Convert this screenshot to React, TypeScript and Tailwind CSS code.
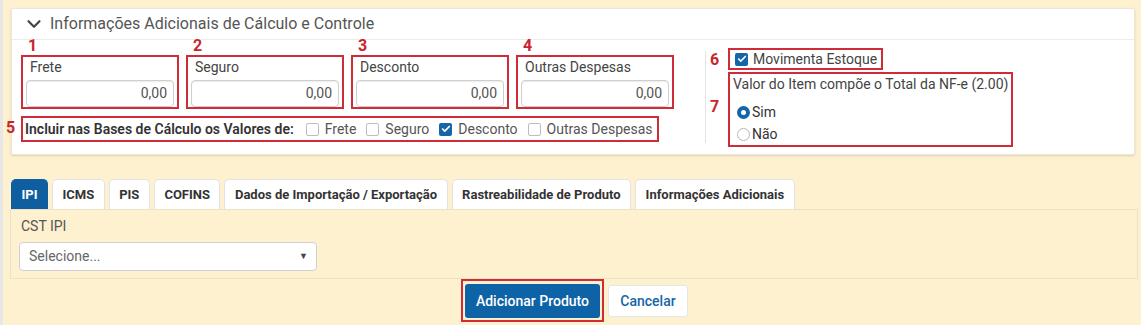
import React from 'react';
import { ChevronDown, Check } from 'lucide-react';

const fields = ['Frete', 'Seguro', 'Desconto', 'Outras Despesas'];

const bases = [
  { label: 'Frete', checked: false },
  { label: 'Seguro', checked: false },
  { label: 'Desconto', checked: true },
  { label: 'Outras Despesas', checked: false },
];

const tabs = [
  'IPI',
  'ICMS',
  'PIS',
  'COFINS',
  'Dados de Importação / Exportação',
  'Rastreabilidade de Produto',
  'Informações Adicionais',
];

function Checkbox({ checked }: { checked: boolean }) {
  if (checked) {
    return (
      <span className="w-[13px] h-[13px] rounded-[2px] bg-[#1565a8] flex items-center justify-center shrink-0">
        <Check size={10} strokeWidth={4} color="#fff" />
      </span>
    );
  }
  return <span className="w-[13px] h-[13px] rounded-[2px] border border-[#bdbdbd] bg-white shrink-0" />;
}

function Radio({ checked }: { checked: boolean }) {
  if (checked) {
    return (
      <span className="w-[13px] h-[13px] rounded-full bg-[#1565a8] flex items-center justify-center shrink-0">
        <span className="w-[5px] h-[5px] rounded-full bg-white" />
      </span>
    );
  }
  return <span className="w-[13px] h-[13px] rounded-full border border-[#b5b5b5] bg-white shrink-0" />;
}

export default function App() {
  return (
    <div
      className="w-[1141px] h-[325px] overflow-hidden bg-[#fdf1cf] border-l-[3px] border-[#e7e7e7] pt-[8px] text-[#444]"
      style={{ fontFamily: 'Roboto, "Liberation Sans", sans-serif' }}
    >
      {/* Cálculo e Controle panel */}
      <div className="ml-[8px] w-[1124px] bg-white border border-[#ebe6d6] rounded-[2px] shadow-sm">
        <div className="h-[31px] flex items-center pl-[11px] gap-[5px] border-b border-[#ececec]">
          <ChevronDown size={22} strokeWidth={2.4} className="text-[#444]" />
          <span className="text-[16px] text-[#555]">Informações Adicionais de Cálculo e Controle</span>
        </div>

        <div className="flex">
          {/* left side */}
          <div className="w-[693px] pl-[9px] pb-[12px]">
            <div className="flex gap-[7px]">
              {fields.map((f, i) => (
                <div key={f} className="w-[158px] flex flex-col">
                  <div className="h-[15px] leading-[12px] pl-[7px] text-[16px] font-bold text-[#c9252f]">{i + 1}</div>
                  <div className="h-[54px] border-2 border-[#cf2c37] px-[3px]">
                    <div className="pt-[1px] leading-[18px] pl-[4px] text-[14px] text-[#444]">{f}</div>
                    <div className="mt-[4px] h-[27px] border border-[#cfcfcf] rounded-[4px] shadow-[inset_0_1px_1px_rgba(0,0,0,0.08)] flex items-center justify-end pr-[6px] text-[14px] text-[#555]">
                      0,00
                    </div>
                  </div>
                </div>
              ))}
            </div>

            <div className="relative mt-[7px] w-[638px] h-[26px] border-2 border-[#cf2c37] flex items-center pl-[2px] text-[14px]">
              <span className="absolute -left-[17px] top-[2px] leading-[16px] text-[16px] font-bold text-[#c9252f]">5</span>
              <span className="font-semibold text-[#333]">Incluir nas Bases de Cálculo os Valores de:</span>
              <div className="flex items-center ml-[12px] gap-[10px]">
                {bases.map((b) => (
                  <label key={b.label} className="flex items-center gap-[6px] text-[#555]">
                    <Checkbox checked={b.checked} />
                    {b.label}
                  </label>
                ))}
              </div>
            </div>
          </div>

          {/* right side */}
          <div className="flex">
            <div className="w-px h-[92px] mt-[11px] bg-[#e4e4e4]" />
            <div className="relative pl-[22px] pt-[8px] text-[14px]">
              <span className="absolute left-[4px] top-[12px] leading-[15px] text-[16px] font-bold text-[#c9252f]">6</span>
              <span className="absolute left-[4px] top-[59px] leading-[15px] text-[16px] font-bold text-[#c9252f]">7</span>
              <div className="w-[155px] h-[22px] border-2 border-[#cf2c37] flex items-center pl-[5px] gap-[5px] text-[#444]">
                <Checkbox checked />
                Movimenta Estoque
              </div>
              <div className="mt-[2px] w-[285px] h-[75px] border-2 border-[#cf2c37] pl-[3px]">
                <div className="leading-[20px] whitespace-nowrap text-[#444]">Valor do Item compõe o Total da NF-e (2.00)</div>
                <div className="mt-[7px]">
                  <div className="h-[22px] flex items-center gap-[2px] pl-[4px] text-[#333]">
                    <Radio checked />
                    Sim
                  </div>
                  <div className="h-[22px] flex items-center gap-[2px] pl-[4px] text-[#333]">
                    <Radio checked={false} />
                    Não
                  </div>
                </div>
              </div>
            </div>
          </div>
        </div>
      </div>

      {/* tabs */}
      <div className="mt-[24px] ml-[8px] flex gap-[4px]">
        {tabs.map((t, i) => (
          <div
            key={t}
            className={
              i === 0
                ? 'h-[30px] px-[9.5px] flex items-center rounded-t-[5px] bg-[#0f5fa0] border border-b-0 border-[#0f5fa0] text-white text-[13px] font-bold'
                : 'h-[30px] px-[9.5px] flex items-center rounded-t-[5px] bg-white border border-b-0 border-[#e2e2e2] text-[#333] text-[13px] font-bold'
            }
          >
            {t}
          </div>
        ))}
      </div>
      <div className="ml-[7px] w-[1128px] h-[70px] border border-[#ece3c6] px-[8px]">
        <div className="pt-[6px] leading-[20px] pl-[2px] text-[14px] text-[#555]">CST IPI</div>
        <div className="mt-[6px] w-[298px] h-[29px] bg-white border border-[#d0d0d0] rounded-[4px] flex items-center justify-between pl-[9px] pr-[8px] text-[14px] text-[#666]">
          <span>Selecione...</span>
          <span className="text-[9px] text-[#444]">▼</span>
        </div>
      </div>

      {/* actions */}
      <div className="flex justify-center gap-[4px] pl-[5px]">
        <div className="w-[143px] h-[43px] border-2 border-[#cf2c37] p-[2px] pt-[3px]">
          <button className="w-[135px] h-[34px] bg-[#0d63a5] rounded-[3px] text-white text-[14px] font-medium">
            Adicionar Produto
          </button>
        </div>
        <button className="mt-[6px] w-[80px] h-[32px] bg-white border border-[#e6e6e6] rounded-[3px] text-[#1565a8] text-[14px] font-medium">
          Cancelar
        </button>
      </div>
    </div>
  );
}
